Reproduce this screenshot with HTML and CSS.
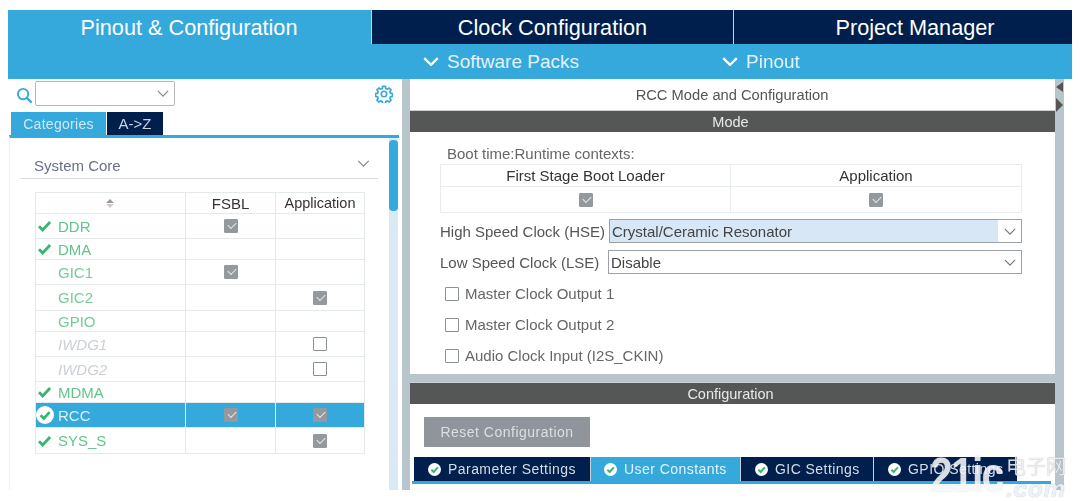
FILE: index.html
```html
<!DOCTYPE html>
<html lang="en">
<head>
<meta charset="utf-8">
<title>RCC Mode and Configuration</title>
<link rel="stylesheet" href="styles.css">
</head>
<body>
<svg class="defs" width="0" height="0" aria-hidden="true">
  <symbol id="tick" viewBox="0 0 14 12"><path d="M1.5 6.2 5.2 10 12.6 2" fill="none" stroke="currentColor" stroke-width="2.8"/></symbol>
  <symbol id="chev" viewBox="0 0 14 8"><path d="M1 1l6 6 6-6" fill="none" stroke="currentColor" stroke-width="1.4"/></symbol>
  <symbol id="chevb" viewBox="0 0 14 8"><path d="M1 1l6 6 6-6" fill="none" stroke="currentColor" stroke-width="2"/></symbol>
  <symbol id="badge" viewBox="0 0 14 14"><circle cx="7" cy="7" r="7" fill="#fff"/><path d="M3.6 7.2 6.1 9.7 10.6 4.8" fill="none" stroke="#3cb371" stroke-width="2.1"/></symbol>
</svg>
<div class="app">
  <nav class="top">
    <div class="top-tab top-on">Pinout &amp; Configuration</div>
    <div class="top-tab top-clock">Clock Configuration</div>
    <div class="top-tab top-pm">Project Manager</div>
  </nav>
  <div class="sub">
    <div class="sub-item sub-packs"><svg class="sub-chev"><use href="#chevb"/></svg>Software Packs</div>
    <div class="sub-item"><svg class="sub-chev"><use href="#chevb"/></svg>Pinout</div>
  </div>
  <div class="main">
    <aside class="left">
      <div class="search">
        <svg class="glass" viewBox="0 0 18 18"><circle cx="7.5" cy="7.5" r="5.5" fill="none" stroke="#35a9dc" stroke-width="2"/><path d="M11.5 11.5 16.5 16.5" stroke="#35a9dc" stroke-width="2.4"/></svg>
        <div class="combo"><svg class="combo-chev"><use href="#chev"/></svg></div>
        <svg class="gear" viewBox="0 0 20 20"><circle cx="10" cy="10" r="3" fill="none" stroke="#35a9dc" stroke-width="1.8"/><path d="M8.5 1.5h3l.5 2.4 1.7.7 2-1.3 2.1 2.1-1.3 2 .7 1.7 2.3.5v3l-2.3.5-.7 1.7 1.3 2-2.1 2.1-2-1.3-1.7.7-.5 2.3h-3l-.5-2.3-1.7-.7-2 1.3-2.1-2.1 1.3-2-.7-1.7-2.3-.5v-3l2.3-.5.7-1.7-1.3-2 2.1-2.1 2 1.3 1.7-.7z" fill="none" stroke="#35a9dc" stroke-width="1.9"/></svg>
      </div>
      <div class="cat-tabs">
        <div class="cat-tab cat-on">Categories</div>
        <div class="cat-tab cat-off">A-&gt;Z</div>
      </div>
      <div class="cat-body">
        <div class="cat-main">
          <div class="core-head"><span>System Core</span><svg class="core-chev"><use href="#chev"/></svg></div>
          <div class="grid">
            <div class="row h21"><div class="c1 sort"><i class="up"></i><i class="down"></i></div><div class="c2 th">FSBL</div><div class="c3 th">Application</div></div>
            <div class="row h25"><div class="c1 ok"><svg class="tick"><use href="#tick"/></svg>DDR</div><div class="c2"><span class="cb on"></span></div><div class="c3"></div></div>
            <div class="row h21"><div class="c1 ok"><svg class="tick"><use href="#tick"/></svg>DMA</div><div class="c2"></div><div class="c3"></div></div>
            <div class="row h25"><div class="c1 ok2">GIC1</div><div class="c2"><span class="cb on"></span></div><div class="c3"></div></div>
            <div class="row h26"><div class="c1 ok2">GIC2</div><div class="c2"></div><div class="c3"><span class="cb on"></span></div></div>
            <div class="row h21"><div class="c1 ok2">GPIO</div><div class="c2"></div><div class="c3"></div></div>
            <div class="row h25"><div class="c1 dis">IWDG1</div><div class="c2"></div><div class="c3"><span class="cb"></span></div></div>
            <div class="row h25"><div class="c1 dis">IWDG2</div><div class="c2"></div><div class="c3"><span class="cb"></span></div></div>
            <div class="row h21"><div class="c1 ok"><svg class="tick"><use href="#tick"/></svg>MDMA</div><div class="c2"></div><div class="c3"></div></div>
            <div class="row h25 sel"><div class="c1"><svg class="badge"><use href="#badge"/></svg>RCC</div><div class="c2"><span class="cb on"></span></div><div class="c3"><span class="cb on"></span></div></div>
            <div class="row h26"><div class="c1 ok"><svg class="tick"><use href="#tick"/></svg>SYS_S</div><div class="c2"></div><div class="c3"><span class="cb on"></span></div></div>
          </div>
        </div>
        <div class="track"><div class="thumb"></div></div>
      </div>
    </aside>
    <div class="split"></div>
    <section class="right">
      <div class="r-title">RCC Mode and Configuration</div>
      <div class="bar">Mode</div>
      <div class="mode">
        <div class="boot-label">Boot time:Runtime contexts:</div>
        <div class="boot">
          <div class="boot-cell">First Stage Boot Loader</div>
          <div class="boot-cell">Application</div>
          <div class="boot-cell"><span class="cb on"></span></div>
          <div class="boot-cell"><span class="cb on"></span></div>
        </div>
        <div class="field hse"><span class="f-label">High Speed Clock (HSE)</span><div class="f-select f-hi"><span class="f-val">Crystal/Ceramic Resonator</span><span class="f-btn"><svg class="f-chev"><use href="#chev"/></svg></span></div></div>
        <div class="field lse"><span class="f-label">Low Speed Clock (LSE)</span><div class="f-select"><span class="f-val">Disable</span><span class="f-btn"><svg class="f-chev"><use href="#chev"/></svg></span></div></div>
        <div class="opt"><span class="box"></span>Master Clock Output 1</div>
        <div class="opt"><span class="box"></span>Master Clock Output 2</div>
        <div class="opt"><span class="box"></span>Audio Clock Input (I2S_CKIN)</div>
      </div>
      <div class="band"></div>
      <div class="bar">Configuration</div>
      <div class="config">
        <div class="reset">Reset Configuration</div>
        <div class="cfg-tabs">
          <div class="cfg-tab t1"><svg class="cfg-ok"><use href="#badge"/></svg>Parameter Settings</div>
          <div class="cfg-tab t2 cfg-on"><svg class="cfg-ok"><use href="#badge"/></svg>User Constants</div>
          <div class="cfg-tab t3"><svg class="cfg-ok"><use href="#badge"/></svg>GIC Settings</div>
          <div class="cfg-tab t4"><svg class="cfg-ok"><use href="#badge"/></svg>GPIO Settings</div>
        </div>
        <div class="cfg-line"></div>
      </div>
    </section>
    <div class="strip"><i class="arrow-l"></i><i class="arrow-r"></i></div>
  </div>
</div>
<div class="mark"><span class="mark-big">21ic</span><span class="mark-side"><span class="mark-cn">电子网</span><span class="mark-com">.com</span></span></div>
</body>
</html>
```
FILE: styles.css
```css
* { box-sizing: border-box; }
html, body { margin: 0; background: #fff; }
body { width: 1080px; height: 501px; padding: 10px 8px 0; overflow: hidden; font-family: "Liberation Sans", Arial, sans-serif; position: relative; }
.defs { position: absolute; }
.app { width: 1064px; height: 480px; display: flex; flex-direction: column; filter: blur(.45px); }

.top { height: 34px; display: flex; background: #001f4c; }
.top-tab { color: #fff; font-size: 21.7px; display: flex; align-items: center; justify-content: center; padding-top: 2px; }
.top-on { width: 363px; background: #35a9dc; border-right: 1px solid #35a9dc; }
.top-clock { width: 362px; border-left: 1px solid #c8d2dc; }
.top-pm { flex: 1; border-left: 1px solid #c8d2dc; padding-left: 24px; }

.sub { height: 35px; background: #35a9dc; display: flex; color: #e4f2fa; font-size: 19px; align-items: center; padding-left: 415px; }
.sub-item { display: flex; align-items: center; }
.sub-packs { width: 299px; }
.sub-chev { width: 16px; height: 9px; margin-right: 8px; color: #fff; }

.main { flex: 1; display: flex; min-height: 0; }
.left { width: 394px; display: flex; flex-direction: column; padding-left: 1px; }
.search { height: 33px; display: flex; align-items: flex-start; padding: 2px 0 0 7px; }
.glass { width: 17px; height: 17px; margin-top: 6px; }
.combo { width: 140px; height: 25px; margin-left: 2px; border: 1px solid #b5b9bc; border-radius: 2px; display: flex; align-items: center; justify-content: flex-end; padding-right: 5px; }
.combo-chev { width: 12px; height: 7px; color: #888; }
.gear { width: 18px; height: 18px; margin: 4px 0 0 200px; }

.cat-tabs { height: 23px; display: flex; padding-left: 2px; }
.cat-tab { font-size: 14px; display: flex; align-items: center; justify-content: center; letter-spacing: .3px; }
.cat-on { width: 95px; background: #35a9dc; color: #cfe8f5; }
.cat-off { width: 56px; background: #001f4c; color: #c8d2dc; margin-left: 1px; letter-spacing: 0; font-size: 15px; }
.cat-body { flex: 1; display: flex; border-top: 3px solid #35a9dc; border-left: 1px solid #eef1f3; min-height: 0; margin-right: 3px; }
.cat-main { width: 379px; padding-left: 11px; }
.core-head { width: 357px; height: 41px; padding: 19px 8px 0 13px; display: flex; justify-content: space-between; align-items: flex-start; border-bottom: 1px solid #d5d9dc; color: #6a6f88; font-size: 15px; }
.core-chev { width: 13px; height: 7px; margin-top: 3px; color: #888; }
.grid { width: 330px; margin: 13px 0 0 14px; border: 1px solid #e4e9ec; border-bottom: 0; }
.row { display: flex; border-bottom: 1px solid #e4e9ec; font-size: 15px; }
.h21 { height: 21px; } .h25 { height: 25px; } .h26 { height: 26px; }
.c1 { width: 149px; display: flex; align-items: center; padding-left: 22px; }
.c2, .c3 { display: flex; align-items: center; justify-content: center; border-left: 1px solid #e4e9ec; }
.c2 { width: 90px; }
.c3 { width: 89px; }
.th { color: #333; font-size: 15px; }
.c3.th { font-size: 14.5px; }
.sort { flex-direction: column; justify-content: center; padding: 0 2px 0 0; gap: 1px; }
.up { border: 4px solid transparent; border-top: 0; border-bottom: 4px solid #999; }
.down { border: 4px solid transparent; border-bottom: 0; border-top: 4px solid #ccc; }
.ok { color: #62c48b; padding-left: 1px; }
.ok2 { color: #77cb98; }
.dis { color: #ccd0d4; font-style: italic; }
.tick { width: 15px; height: 12px; margin-right: 6px; color: #3cb371; }
.sel { background: #35a9dc; }
.sel .c1 { color: #dff0f9; padding-left: 0; }
.sel .c2, .sel .c3 { border-left-color: #eaf5fb; }
.badge { width: 18px; height: 18px; margin: 0 4px 0 0; }
.cb { width: 14px; height: 14px; border: 1px solid #8a8f94; border-radius: 1px; background: #fff; display: inline-block; position: relative; }
.cb.on { background: #94999e; border-color: #94999e; }
.cb.on::after { content: ""; position: absolute; left: 3px; top: 2px; width: 7px; height: 4px; border-left: 1.6px solid #e8eaec; border-bottom: 1.6px solid #e8eaec; transform: rotate(-45deg); }
.track { width: 9px; background: #d9e9f6; }
.thumb { width: 9px; height: 71px; margin-top: 2px; background: #35a9dc; border-radius: 4px; }

.split { width: 8px; background: #b9c5cc; }
.right { width: 645px; display: flex; flex-direction: column; }
.r-title { height: 32px; display: flex; align-items: center; justify-content: center; color: #555; font-size: 14.7px; padding-right: 1px; }
.bar { height: 21px; background: #555756; color: #e8e8e8; font-size: 14.5px; display: flex; align-items: center; justify-content: center; padding-right: 4px; box-shadow: 0 -1px 0 #cfd2d4; }
.mode { height: 242px; padding: 13px 33px 0 30px; }
.boot-label { height: 19px; padding-left: 7px; color: #666; font-size: 15px; line-height: 18px; }
.boot { display: grid; grid-template-columns: 290px 290px; grid-template-rows: 22px 25px; border: 1px solid #e8ecef; width: 582px; }
.boot-cell { display: flex; align-items: center; justify-content: center; color: #333; font-size: 15px; border-right: 1px solid #e8ecef; border-bottom: 1px solid #e8ecef; }
.boot-cell:nth-child(2n) { border-right: 0; }
.boot-cell:nth-child(n+3) { border-bottom: 0; }
.field { display: flex; align-items: center; height: 24px; color: #555; font-size: 15px; }
.hse { margin-top: 6px; }
.lse { margin-top: 7px; }
.f-label { white-space: nowrap; }
.hse .f-label { width: 169px; }
.lse .f-label { width: 168px; }
.f-select { flex: 1; height: 24px; border: 1px solid #9da1a5; display: flex; align-items: center; }
.f-val { flex: 1; padding-left: 2px; color: #444; height: 100%; display: flex; align-items: center; }
.f-hi .f-val { background: #d7e7f5; }
.f-btn { width: 23px; display: flex; justify-content: center; }
.f-chev { width: 12px; height: 7px; color: #777; }
.opt { height: 31px; display: flex; align-items: center; padding-left: 5px; color: #666; font-size: 15px; }
.field + .opt { margin-top: 4px; }
.box { width: 14px; height: 14px; border: 1px solid #8a8f94; border-radius: 1px; margin-right: 6px; }
.band { height: 9px; background: #b9c5cc; }
.config { flex: 1; padding: 13px 0 0 2px; }
.reset { width: 166px; height: 30px; margin-left: 12px; background: #90959b; color: #dcdfe2; font-size: 14px; display: flex; align-items: center; justify-content: center; letter-spacing: .5px; }
.cfg-tabs { display: flex; height: 24px; margin: 10px 0 0 2px; }
.cfg-tab { background: #001f4c; color: #d6dde5; font-size: 14px; letter-spacing: .45px; display: flex; align-items: center; padding-left: 14px; border-right: 1px solid #c8d2dc; white-space: nowrap; }
.cfg-on { background: #35a9dc; color: #e4f2fa; }
.t1 { width: 177px; } .t2 { width: 150px; padding-left: 13px; } .t3 { width: 133px; } .t4 { width: 143px; border-right: 0; }
.cfg-ok { width: 13px; height: 13px; margin-right: 7px; }
.cfg-line { height: 3px; width: 639px; background: #35a9dc; }

.strip { width: 9px; background: #b9c5cc; display: flex; flex-direction: column; align-items: center; padding-top: 3px; }
.arrow-l { border: 5px solid transparent; border-left: 0; border-right: 7px solid #555; margin-bottom: 6px; }
.arrow-r { border: 7px solid transparent; border-right: 0; border-left: 7px solid #555; }

.mark { position: absolute; left: 930px; top: 450px; display: flex; align-items: flex-end; color: rgba(255,255,255,.82); filter: blur(.4px); }
.mark-big { font-size: 48px; line-height: 50px; font-weight: 700; letter-spacing: -2px; width: 76px; transform: scaleX(.85); transform-origin: left; text-shadow: 0 0 2px rgba(120,135,150,.35); }
.mark-side { display: flex; flex-direction: column; align-items: flex-start; }
.mark-cn { font-family: "Noto Sans CJK SC", sans-serif; font-size: 20px; line-height: 24px; color: rgba(255,255,255,.8); text-shadow: 0 0 1px rgba(90,100,110,.6); }
.mark-com { font-size: 24px; line-height: 22px; font-weight: 700; font-style: italic; letter-spacing: 1px; color: rgba(255,255,255,.85); text-shadow: 0 0 1px rgba(80,130,170,.7); }
```
